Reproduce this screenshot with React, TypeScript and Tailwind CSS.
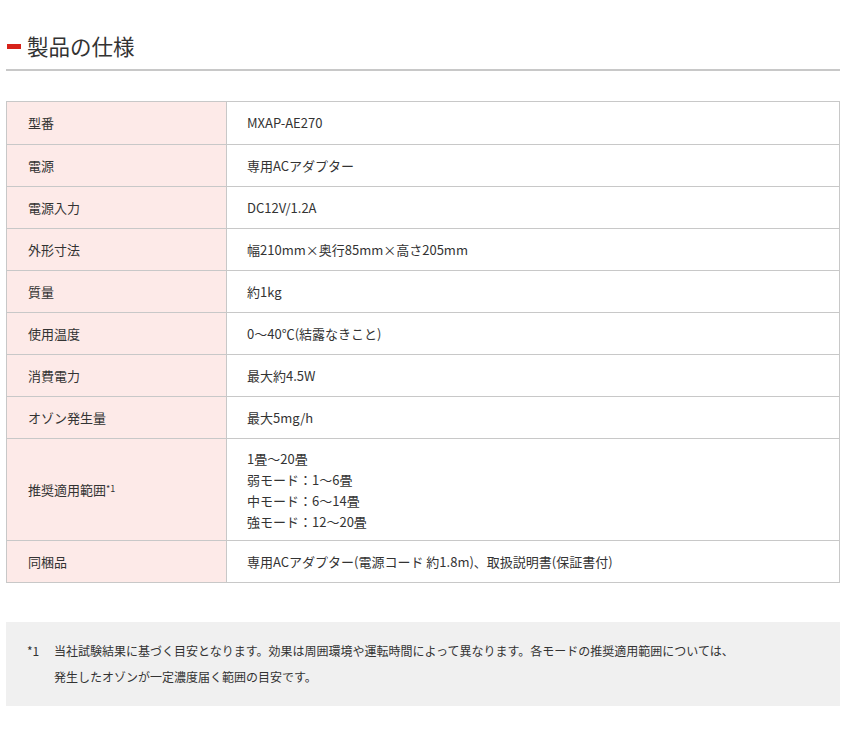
export default function App() {
  const rows: [string, React.ReactNode][] = [
    ["型番", "MXAP-AE270"],
    ["電源", "専用ACアダプター"],
    ["電源入力", "DC12V/1.2A"],
    ["外形寸法", "幅210mm×奥行85mm×高さ205mm"],
    ["質量", "約1kg"],
    ["使用温度", "0～40℃(結露なきこと)"],
    ["消費電力", "最大約4.5W"],
    ["オゾン発生量", "最大5mg/h"],
  ];
  const font = { fontFamily: '"Noto Sans CJK JP", "Noto Sans", sans-serif' };
  const Row = ({ label, children, tall }: { label: React.ReactNode; children: React.ReactNode; tall?: boolean }) => (
    <div className={`flex border-t border-[#c8c8c8] first:border-t-0 ${tall ? "h-[102px]" : "h-[42px]"}`}>
      <div className="w-[220px] shrink-0 bg-[#fdeae8] border-r border-[#c8c8c8] flex items-center pl-[21px]">{label}</div>
      <div className="flex-1 flex items-center pl-[20px]">{children}</div>
    </div>
  );
  return (
    <div className="w-[850px] h-[740px] bg-white text-[#333] text-[13px]" style={font}>
      <div className="pt-[31px] px-[6px] w-[840px]">
        <div className="flex items-center h-[30px]">
          <div className="w-[14px] h-[5px] bg-[#d7221a] ml-[1px] mr-[6px]" />
          <div className="text-[21.5px] text-[#333] leading-none">製品の仕様</div>
        </div>
        <div className="mt-[8px] h-[2px] bg-[#c8c8c8] w-[834px]" />
        <div className="mt-[30px] w-[834px] border border-[#c8c8c8]">
          {rows.map(([l, v]) => (
            <Row key={l} label={l}>{v}</Row>
          ))}
          <Row tall label={<span>推奨適用範囲<sup className="text-[9px] relative -top-[3px]">*1</sup></span>}>
            <div className="leading-[21px]">
              <div>1畳～20畳</div>
              <div>弱モード：1～6畳</div>
              <div>中モード：6～14畳</div>
              <div>強モード：12～20畳</div>
            </div>
          </Row>
          <Row label="同梱品">専用ACアダプター(電源コード 約1.8m)、取扱説明書(保証書付)</Row>
        </div>
        <div className="mt-[39px] w-[834px] h-[84px] bg-[#f0f0f0] pt-[16px] pl-[21px] text-[12px] leading-[26px]">
          <div className="flex">
            <span className="w-[27px] shrink-0">*1</span>
            <span>当社試験結果に基づく目安となります。効果は周囲環境や運転時間によって異なります。各モードの推奨適用範囲については、<br />発生したオゾンが一定濃度届く範囲の目安です。</span>
          </div>
        </div>
      </div>
    </div>
  );
}
